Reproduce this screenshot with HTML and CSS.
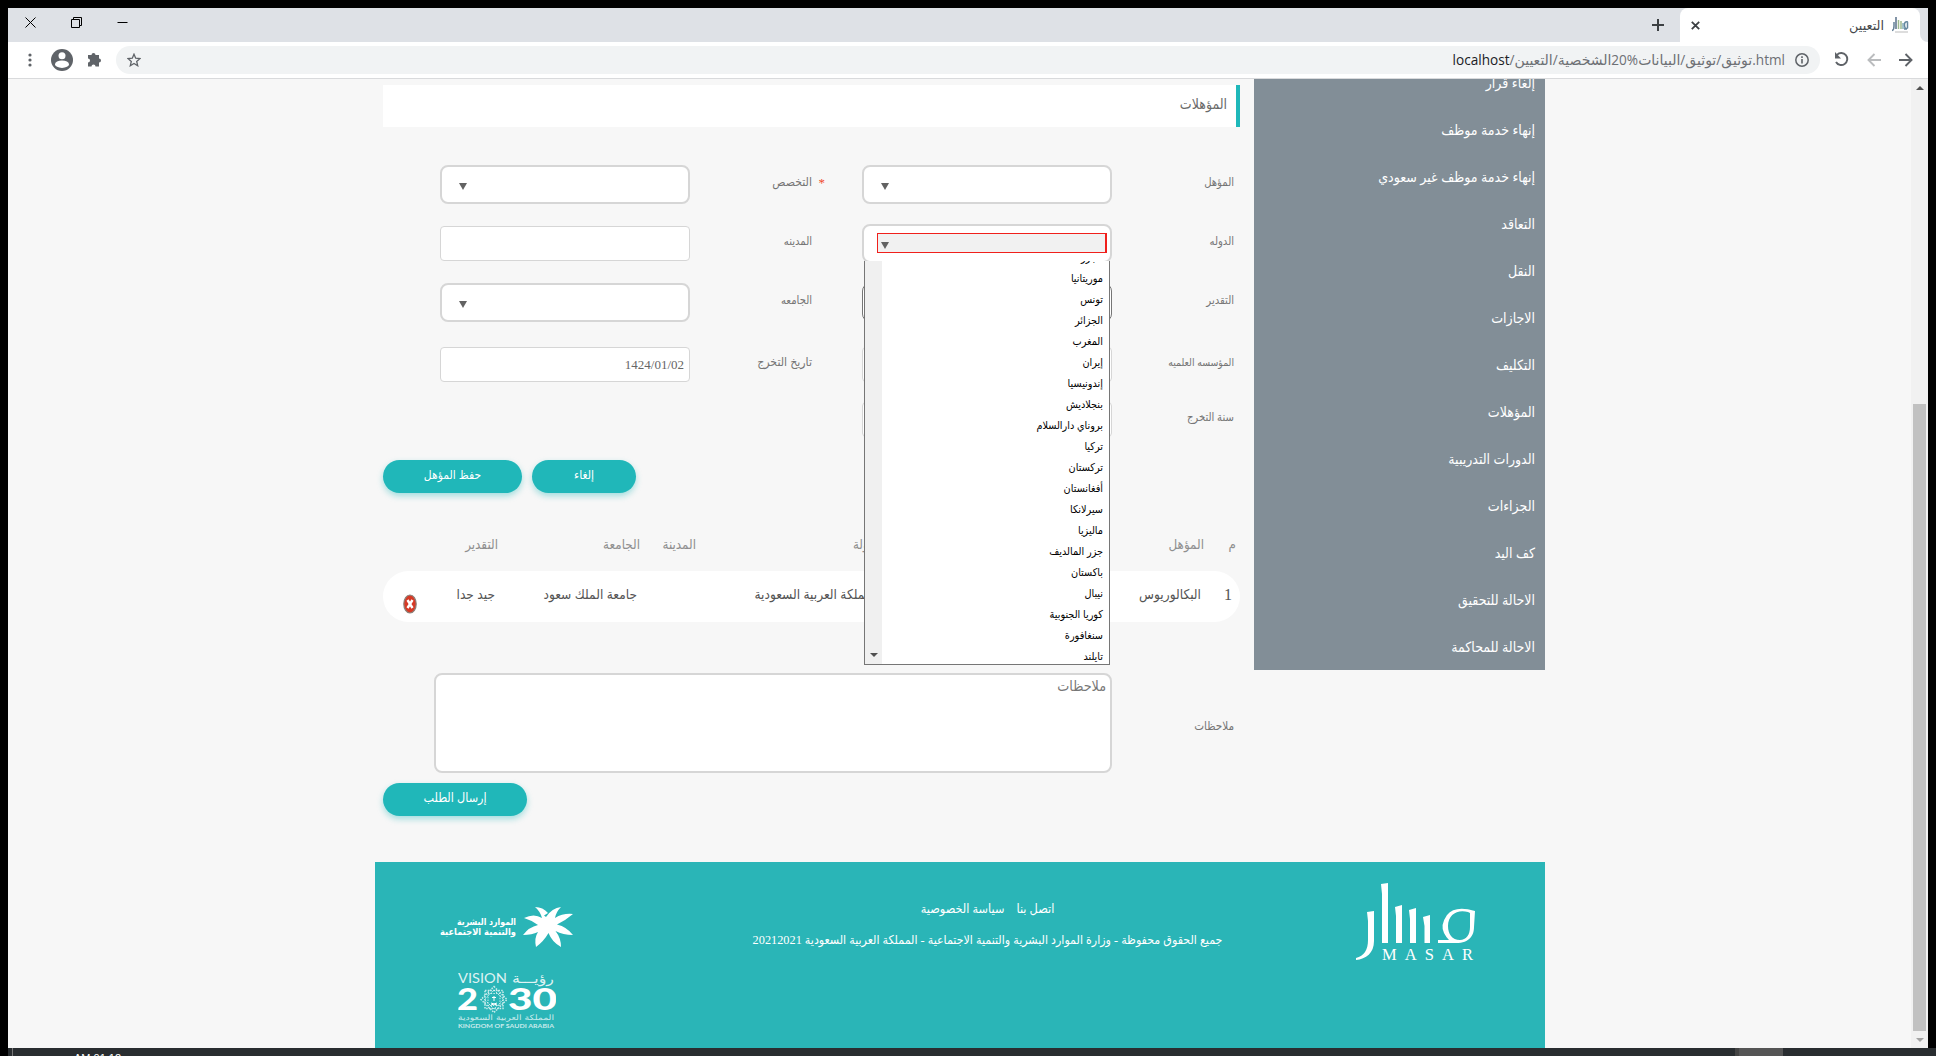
FILE: index.html
```html
<!DOCTYPE html>
<html lang="ar" dir="rtl">
<head>
<meta charset="utf-8">
<title>التعيين</title>
<link rel="stylesheet" href="styles.css">
</head>
<body>
<div class="window">
  <header class="tabstrip">
    <div class="tab-edge"></div>
    <div class="tab">
      <svg class="favicon" width="17" height="17" viewBox="0 0 17 17"><g fill="none" stroke-width="1.500"><path d="M2 5V9Q2 13 0 13.500" stroke="#668298"/><path d="M4 0V12" stroke="#58718a"/><path d="M6.500 3V12M9 4V12" stroke="#9db98e"/><path d="M11 6V12" stroke="#84aebb"/><path d="M16 5Q12 4 12.500 8.500T15.500 11V5M12 12H15" stroke="#64879e"/></g><path d="M3 15H16" stroke="#bbb"/></svg>
      <span class="tab-title">التعيين</span>
      <svg class="tab-close" width="9" height="9" viewBox="0 0 9 9"><path d="M.8.8 8.200 8.200M8.200.8.8 8.200" stroke="#3c4043" stroke-width="1.800"/></svg>
    </div>
    <svg class="new-tab" width="12" height="12" viewBox="0 0 12 12"><path d="M6 0V12M0 6H12" stroke="#3c4043" stroke-width="2"/></svg>
    <div class="win-controls">
      <svg width="11" height="11" viewBox="0 0 11 11"><path d="M.5 5.500H10.500" stroke="#000"/></svg>
      <svg width="11" height="11" viewBox="0 0 11 11"><path d="M.5 2.500H8.500V10.500H.5ZM2.500 2.500V.5H10.500V8.500H8.500" fill="none" stroke="#000"/></svg>
      <svg width="11" height="11" viewBox="0 0 11 11"><path d="M.5.5 10.500 10.500M10.500.5.5 10.500" stroke="#000"/></svg>
    </div>
  </header>
  <div class="toolbar">
    <svg class="fwd" width="14" height="14" viewBox="0 0 14 14"><path d="M0 7H12.500M6.500 1 12.500 7 6.500 13" fill="none" stroke="#5f6368" stroke-width="1.900"/></svg>
    <svg class="back" width="14" height="14" viewBox="0 0 14 14"><path d="M14 7H1.500M7.500 1 1.500 7 7.500 13" fill="none" stroke="#babcbe" stroke-width="1.900"/></svg>
    <svg class="reload" width="15" height="15" viewBox="0 0 15 15"><path d="M3 2.800A6 6 0 1 1 2 10" fill="none" stroke="#5f6368" stroke-width="1.900"/><path d="M1 0V6.500H7Z" fill="#5f6368"/></svg>
    <div class="omnibox">
      <svg width="14" height="14" viewBox="0 0 14 14"><circle cx="7" cy="7" r="6.200" fill="none" stroke="#5f6368" stroke-width="1.500"/><path d="M7 6V10.500M7 3.300V5" stroke="#5f6368" stroke-width="1.600"/></svg>
      <span class="url"><bdo dir="ltr"><b>localhost</b>/</bdo><bdi>التعيين</bdi><bdo dir="ltr">/</bdo><bdi>الشخصية</bdi><bdo dir="ltr">20%</bdo><bdi>البيانات</bdi><bdo dir="ltr">/</bdo><bdi>توثيق</bdi><bdo dir="ltr">/</bdo><bdi>توثيق</bdi><bdo dir="ltr">.html</bdo></span>
      <svg class="star" width="14" height="14" viewBox="0 0 14 14"><path d="M7 1.200 8.700 5.200 13 5.600 9.700 8.400 10.700 12.700 7 10.400 3.300 12.700 4.300 8.400 1 5.600 5.300 5.200Z" fill="none" stroke="#5f6368" stroke-width="1.300"/></svg>
    </div>
    <svg class="ext" width="15" height="15" viewBox="0 0 15 15"><path d="M1 3H4.500A2 2 0 1 1 8.500 3H12V6.500A2 2 0 1 1 12 10.500V14.500H8.500A2 2 0 0 0 4.500 14.500H1V10.500A2 2 0 0 0 1 6.500Z" fill="#5f6368"/></svg>
    <svg class="user" width="22" height="22" viewBox="0 0 22 22"><circle cx="11" cy="11" r="11" fill="#5f6368"/><circle cx="11" cy="6.700" r="3.500" fill="#fff"/><ellipse cx="11" cy="15.200" rx="7" ry="3.700" fill="#fff"/></svg>
    <svg class="kebab" width="4" height="14" viewBox="0 0 4 14" fill="#5f6368"><circle cx="2" cy="2" r="1.600"/><circle cx="2" cy="7" r="1.600"/><circle cx="2" cy="12" r="1.600"/></svg>
  </div>
  <div class="viewport">
    <div class="scrollbar"><i class="up"></i><i class="thumb"></i><i class="down"></i></div>
    <div class="page">
      <div class="columns">
        <nav class="sidebar">
          <a>إلغاء قرار</a>
          <a>إنهاء خدمة موظف</a>
          <a>إنهاء خدمة موظف غير سعودي</a>
          <a>التعاقد</a>
          <a>النقل</a>
          <a>الاجازات</a>
          <a>التكليف</a>
          <a>المؤهلات</a>
          <a>الدورات التدريبية</a>
          <a>الجزاءات</a>
          <a>كف اليد</a>
          <a>الاحالة للتحقيق</a>
          <a>الاحالة للمحاكمة</a>
        </nav>
        <main class="content">
          <h2 class="section-title">المؤهلات</h2>
          <div class="form">
            <label>المؤهل</label><div class="select"></div>
            <label class="wide"><em>*</em>التخصص</label><div class="select"></div>
            <label>الدوله</label>
            <div class="select open"><span class="focus"></span>
              <div class="dropdown">
                <div class="list-scroll"></div>
                <ul>
                  <li>الجزر</li><li>موريتانيا</li><li>تونس</li><li>الجزائر</li><li>المغرب</li><li>إيران</li><li>إندونيسيا</li><li>بنجلاديش</li><li>بروناي دارالسلام</li><li>تركيا</li><li>تركستان</li><li>أفغانستان</li><li>سيرلانكا</li><li>ماليزيا</li><li>جزر المالديف</li><li>باكستان</li><li>نيبال</li><li>كوريا الجنوبية</li><li>سنغافورة</li><li>تايلند</li>
                </ul>
              </div>
            </div>
            <label>المدينه</label><div class="input"></div>
            <label>التقدير</label><div class="select dark"></div>
            <label>الجامعه</label><div class="select"></div>
            <label class="narrow">المؤسسه العلميه</label><div class="input"></div>
            <label class="wide">تاريخ التخرج</label><div class="input date">1424/01/02</div>
            <label>سنة التخرج</label><div class="input"></div>
          </div>
          <div class="actions"><button class="btn cancel">إلغاء</button><button class="btn save">حفظ المؤهل</button></div>
          <div class="table">
            <div class="row head"><span>م</span><span>المؤهل</span><span>الدولة</span><span>المدينة</span><span>الجامعة</span><span>التقدير</span><span></span></div>
            <div class="row data"><span>1</span><span>البكالوريوس</span><span>المملكة العربية السعودية</span><span></span><span>جامعة الملك سعود</span><span>جيد جدا</span><span><svg class="delete" width="14" height="20" viewBox="0 0 14 20"><ellipse cx="7" cy="10" rx="6.200" ry="9" fill="#d63a26" stroke="#8b8079" stroke-width="1.200"/><path d="M4.500 6 9.500 14M9.500 6 4.500 14" stroke="#fff" stroke-width="2.400"/></svg></span></div>
          </div>
          <div class="notes"><label>ملاحظات</label><div class="textarea">ملاحظات</div></div>
          <div class="actions submit"><button class="btn send">إرسال الطلب</button></div>
        </main>
      </div>
      <footer class="footer">
        <svg class="masar" width="120" height="80" viewBox="0 0 120 80"><g fill="#fff"><path d="M25 1 32 0V60H26V11Z"/><path d="M39 24 46 22V60H40V33Z"/><path d="M53 27 60 25V60H54V36Z"/><path d="M67 34 74 32V60H68.500V43Z"/><path d="M11 29 18 28V58C18 70 10 76 0 77V75C8 73 12 67 12 57V38Z"/><path fill-rule="evenodd" d="M119 28Q99 22 91 32Q84 42 88 50Q90 54 93 57H82V60H100C114 60 118 52 118 44ZM114 30V44C114 52 110 57 104 57C96 57 92 51 92 43C92 31 102 26 112 29Z"/></g><text x="26" y="77" textLength="91" font-family="Liberation Serif" font-size="16.500" fill="#fff" direction="ltr">MASAR</text></svg>
        <div class="legal">
          <p class="links"><a>اتصل بنا</a><a>سياسة الخصوصية</a></p>
          <p class="copy">جميع الحقوق محفوظة - وزارة الموارد البشرية والتنمية الاجتماعية - المملكة العربية السعودية 20212021</p>
        </div>
        <div class="partners">
          <svg class="hrsd" width="134" height="42" viewBox="0 0 134 42"><g fill="#fff" font-family="DejaVu Sans, sans-serif" font-weight="bold" font-size="9.500" direction="rtl"><text x="76" y="18.500" textLength="59" lengthAdjust="spacingAndGlyphs">الموارد البشرية</text><text x="76" y="29" textLength="76" lengthAdjust="spacingAndGlyphs">والتنمية الاجتماعية</text></g><path fill="#fff" d="M95 1Q103 1 108 7L104 9.500L106 11Q112 2 121 1Q116 6 115 12Q123 7 133 8Q126 14 117 18.500Q127 21 133 29Q123 29 115.500 25Q121 32 121 41Q112 36 108.500 27Q104 35 96 41Q94 32 98 26Q92 29 83 29Q89 21 98 19Q91 14 84 12Q94 7 102 12Q100 5 95 1Z"/></svg>
          <svg class="vision" width="98" height="58" viewBox="0 0 98 58"><g fill="#fff" font-family="DejaVu Sans, sans-serif"><g direction="ltr"><text x="0" y="11" font-size="13" font-family="Lato" fill-opacity=".85" textLength="49" lengthAdjust="spacingAndGlyphs">VISION</text><g font-size="30" font-weight="900" font-family="Lato"><text x="-1" y="38" textLength="21" lengthAdjust="spacingAndGlyphs">2</text><text x="50" y="38" textLength="49" lengthAdjust="spacingAndGlyphs">30</text></g><text x="0" y="55.500" font-size="6" font-weight="bold" fill-opacity=".75" font-family="Lato" textLength="96" lengthAdjust="spacingAndGlyphs">KINGDOM OF SAUDI ARABIA</text></g><g direction="rtl"><text x="96" y="10.500" font-size="13" fill-opacity=".85" textLength="42" lengthAdjust="spacingAndGlyphs">رؤيـــة</text><text x="96" y="47.500" font-size="7.500" fill-opacity=".75" textLength="96" lengthAdjust="spacingAndGlyphs">المملكة العربية السعودية</text></g></g><g fill="none" stroke="#fff" stroke-opacity=".75" stroke-dasharray="1.500 1.200"><path stroke-width="1.500" d="M27 18.500H45V36.500H27ZM36 14.500 49 27.500 36 40.500 23 27.500Z"/><path d="M30 21.500H42V33.500H30ZM36 18 45.500 27.500 36 37 26.500 27.500Z"/></g><path d="M33 31 39 33M39 31 33 33M36 24V29M34 25.500H38" stroke="#fff"/></svg>
        </div>
      </footer>
    </div>
  </div>
</div>
<div class="taskbar"><span class="taskbar-app"></span><time>AM 01:12</time><i class="peek"></i></div>
</body>
</html>
```
FILE: styles.css
```css
* { box-sizing: border-box; }
html, body { margin: 0; height: 1056px; overflow: hidden; background: #000; }
body { display: flex; flex-direction: column; padding: 8px 8px 0; font-family: "Liberation Serif", "DejaVu Sans Condensed", "DejaVu Sans", serif; }
svg { display: block; flex: none; }
.window { height: 1040px; display: flex; flex-direction: column; background: #fff; }

/* browser frame */
.tabstrip { height: 34px; background: linear-gradient(#dee1e6, #dee1e6) no-repeat 0 0 / 100% 26px, linear-gradient(to left, #fff 20px, #dee1e6 20px 240px, #dee1e6 240px); display: flex; align-items: center; }
.tab-edge { width: 8px; height: 34px; border-bottom-left-radius: 8px; background: #dee1e6; }
.tab { width: 240px; height: 34px; background: #fff; border-radius: 8px 8px 0 0; display: flex; align-items: center; padding: 0 11px; }
.tab-title { margin-right: 8px; font: 12.8px "DejaVu Sans", sans-serif; color: #45484c; }
.tab-close { margin-right: auto; }
.new-tab { margin-right: 16px; }
.win-controls { display: flex; gap: 35px; margin-right: auto; padding-left: 17px; align-self: flex-start; padding-top: 9px; }
.toolbar { height: 37px; border-bottom: 1px solid #d9dadc; display: flex; align-items: center; padding: 0 15px 1px 20px; }
.back { margin-right: 18px; }
.reload { margin-right: 18px; }
.omnibox { width: 1704px; height: 28px; border-radius: 14px; background: #f1f3f4; margin-right: 14px; display: flex; align-items: center; padding: 0 11px; }
.url { direction: ltr; margin-right: 10px; color: #6d7074; font: 13.6px "Open Sans", "DejaVu Sans Condensed", "DejaVu Sans", sans-serif; white-space: nowrap; }
.url bdi { font: 14px/14px "DejaVu Sans", sans-serif; }
.url b { font-weight: normal; color: #202124; }
.star { margin-right: auto; }
.ext { margin-right: 14px; }
.user { margin-right: 14px; }
.kebab { margin-right: auto; }

/* page */
.viewport { height: 969px; background: #f7f7f7; display: flex; overflow: hidden; }
.scrollbar { width: 17px; background: #f1f1f1; display: flex; flex-direction: column; align-items: center; }
.scrollbar .up { margin-top: 7px; border: 4px solid transparent; border-top: 0; border-bottom-color: #505050; }
.scrollbar .thumb { width: 13px; height: 627px; background: #c1c1c1; margin-top: 314px; }
.scrollbar .down { margin-top: 7px; border: 4px solid transparent; border-bottom: 0; border-top-color: #a3a3a3; }
.page { width: 1170px; margin-right: 366px; }
.columns { display: flex; height: 783px; }
.sidebar { width: 291px; height: 591px; background: #828e97; overflow: hidden; display: flex; flex-direction: column; padding-right: 10px; }
.sidebar a { flex: none; height: 47px; line-height: 48px; color: #fff; font-size: 14px; }
.sidebar a:first-child { margin-top: -19px; }
.content { width: 857px; margin-right: 14px; }
.section-title { margin: 6px 0 0; height: 42px; line-height: 40px; background: #fff; border-right: 4px solid #1fb8ba; padding-right: 9px; font-size: 14px; font-weight: normal; color: #6a6a6a; }

.form { margin-top: 28px; display: grid; grid-template-columns: 128px 250px 172px 250px 57px; grid-template-rows: 59px 59px 59px 65px 45px; align-items: center; }
.form label { grid-column: 1; padding: 0 6px 5px 0; font-size: 11.2px; color: #757575; position: relative; }
.form label:nth-of-type(even) { grid-column: 3; padding-right: 50px; }
.form label.wide { font-size: 12.2px; }
.form label.narrow { font-size: 10.4px; }
.form em { position: absolute; right: 37px; top: 0; color: #f0482e; font: 13px "Liberation Serif", serif; }
.select, .input { height: 35px; background: #fff; border: 1px solid #d6d6d6; border-radius: 4px; padding-right: 5px; font-size: 13px; line-height: 33px; color: #666; }
.select { height: 39px; border: 2px solid #d6d6d6; border-radius: 8px; position: relative; }
.select::after { content: ""; position: absolute; left: 17px; top: 16px; border: 4px solid transparent; border-top: 7px solid #626262; border-bottom: 0; }
.select.dark { border: 1px solid #767676; }
.focus { display: block; width: 230px; height: 20px; margin: 7px 0; margin-right: -2px; background: #f1f1f1; border: 1px solid #f0201c; border-right-width: 2px; }
.dropdown { position: absolute; z-index: 2; top: 35px; left: 0; width: 246px; height: 404px; background: #fff; border: 1px solid #767676; border-top: 0; display: flex; flex-direction: row-reverse; overflow: hidden; }
.list-scroll { width: 17px; background: #f0f0f0; display: flex; align-items: flex-end; justify-content: center; }
.list-scroll::after { content: ""; margin-bottom: 7px; border: 4px solid transparent; border-top-color: #505050; border-bottom: 0; }
.dropdown ul { flex: 1; margin: -14px 0 0; padding: 0 6px 0 0; list-style: none; }
.dropdown li { height: 21px; line-height: 20px; font-size: 10.8px; color: #000; }

.actions { display: flex; justify-content: flex-end; gap: 10px; margin-top: 18px; }
.btn { height: 33px; border: 0; border-radius: 17px; background: #20b7b9; color: #fff; box-shadow: 0 3px 6px rgba(32,183,185,.4); font: 12px "Liberation Serif", "DejaVu Sans Condensed", "DejaVu Sans", serif; padding: 0 0 3px; }
.cancel { width: 104px; }
.save { width: 139px; }
.send { width: 144px; font-size: 12.5px; }

.table { margin-top: 27px; }
.row { display: grid; grid-template-columns: 36px 322px 186px 56px 142px 81px 34px; height: 51px; line-height: 50px; font-size: 13.3px; white-space: nowrap; }
.head { color: #8f8f8f; }
.head span:first-child { padding-right: 4px; }
.data { background: #fff; border-radius: 26px; color: #545454; line-height: 47px; font-size: 13.6px; }
.data span { padding-right: 3px; }
.data span:first-child { padding-right: 8px; font-size: 16px; }
.data span:last-child { padding-right: 0; }
.delete { margin-top: 23px; }

.notes { display: flex; align-items: center; margin-top: 51px; }
.notes label { width: 128px; padding: 0 6px 0 0; font-size: 11.6px; color: #757575; margin-top: 6px; }
.textarea { width: 678px; height: 100px; background: #fff; border: 2px solid #d6d6d6; border-radius: 8px; padding: 3px 4px; font-size: 14.2px; color: #777; }
.submit { margin-top: 10px; }

.footer { height: 186px; background: #2ab5b7; color: #fff; display: grid; grid-template-columns: 323px 469px 378px; }
.masar { margin: 21px 69px 0 0; }
.legal { display: flex; flex-direction: column; align-items: center; white-space: nowrap; }
.legal p { margin: 0; }
.links { display: flex; gap: 12px; font-size: 12.6px; line-height: 20px; padding: 37px 0 0 0; margin-left: -6px; }
.copy { font-size: 12.3px; line-height: 20px; padding-top: 11px; }
.partners { direction: ltr; padding-left: 65px; }
.hrsd { margin-top: 44px; }
.vision { margin: 24px 0 0 18px; }

.taskbar { height: 8px; margin: 0 -8px 0 0; background: #292d30; display: flex; overflow: hidden; direction: ltr; }
.taskbar time { order: 1; margin: 4px 0 0 61px; font: 11px/12px "Liberation Sans", sans-serif; color: #fff; }
.peek { width: 1px; background: #777; margin-left: 4px; }
.taskbar-app { order: 2; width: 48px; background: #555; margin-left: 1614px; border-left: 4px solid #444; }
```
